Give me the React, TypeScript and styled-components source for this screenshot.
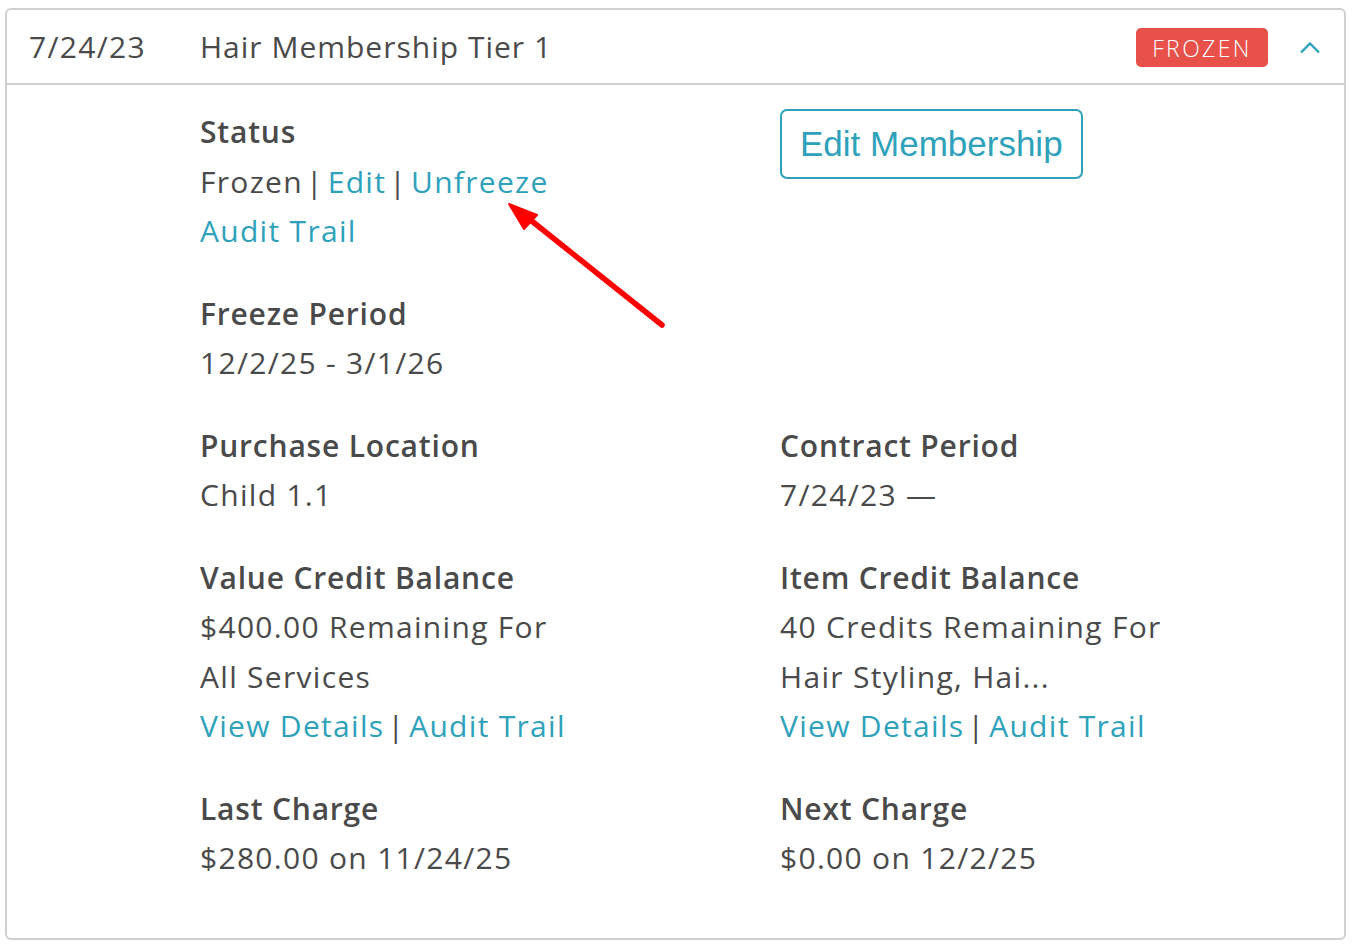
import React from "react";
import styled, { createGlobalStyle } from "styled-components";

const GlobalStyle = createGlobalStyle`
  html, body { margin: 0; padding: 0; background: #ffffff; }
  body { font-family: "Open Sans", Lato, sans-serif; color: #4a4a4a; }
  * { box-sizing: border-box; }
`;

const TEXT = "#4a4a4a";
const LINK = "#2ea2bb";

const Page = styled.div`
  position: relative;
  padding: 8px 6px 8px 5px;
  width: 1352px;
  height: 948px;
`;

const Card = styled.div`
  border: 2px solid #d0d0d0;
  border-radius: 6px;
  height: 932px;
  background: #fff;
`;

const Header = styled.div`
  display: flex;
  align-items: center;
  height: 75px;
  padding: 0 24px 0 22px;
  border-bottom: 2px solid #d0d0d0;
`;

const HeaderDate = styled.div`
  width: 171px;
  font-size: 30px;
  letter-spacing: 1.3px;
  color: ${TEXT};
`;

const HeaderTitle = styled.div`
  font-size: 30px;
  letter-spacing: 1px;
  color: ${TEXT};
  flex: 1;
`;

const Badge = styled.div`
  display: flex;
  align-items: center;
  justify-content: center;
  width: 132px;
  height: 39px;
  margin-top: 2px;
  background: #e8504a;
  color: #fff;
  border-radius: 5px;
  font-size: 23px;
  letter-spacing: 2.4px;
  font-weight: 300;
`;

const Chevron = styled.svg`
  margin-left: 32px;
  margin-top: 2px;
  display: block;
`;

const Body = styled.div`
  display: grid;
  grid-template-columns: 580px 1fr;
  padding: 22px 0 0 193px;
`;

const Section = styled.div`
  margin-bottom: 33px;
`;

const Label = styled.div`
  font-size: 30px;
  font-weight: 600;
  letter-spacing: 0.8px;
  line-height: 49.5px;
  color: ${TEXT};
`;

const Line = styled.div`
  font-size: 30px;
  letter-spacing: 1.3px;
  line-height: 49.5px;
  color: ${TEXT};
  white-space: nowrap;
`;

const Link = styled.a`
  color: ${LINK};
  text-decoration: none;
  cursor: pointer;
`;

const Sep = styled.span`
  color: ${TEXT};
  margin: 0 4px 0 3px;
`;

const ButtonCell = styled.div`
  padding-top: 2px;
`;

const EditButton = styled.button`
  height: 70px;
  padding: 0 18px;
  border: 2px solid ${LINK};
  border-radius: 7px;
  background: #fff;
  color: ${LINK};
  font-family: "Liberation Sans", Arial, sans-serif;
  font-size: 35px;
  cursor: pointer;
`;

const Annotation = styled.svg`
  position: absolute;
  left: 0;
  top: 0;
  pointer-events: none;
`;

export default function App() {
  return (
    <>
      <GlobalStyle />
      <Page>
        <Card>
          <Header>
            <HeaderDate>7/24/23</HeaderDate>
            <HeaderTitle>Hair Membership Tier 1</HeaderTitle>
            <Badge>FROZEN</Badge>
            <Chevron width="20" height="12" viewBox="0 0 20 12">
              <path d="M1 10.5 L10 1.5 L19 10.5" fill="none" stroke={LINK} strokeWidth="2.4" />
            </Chevron>
          </Header>
          <Body>
            <Section>
              <Label>Status</Label>
              <Line>
                Frozen<Sep>|</Sep><Link>Edit</Link><Sep>|</Sep><Link>Unfreeze</Link>
              </Line>
              <Line>
                <Link>Audit Trail</Link>
              </Line>
            </Section>
            <ButtonCell>
              <EditButton>Edit Membership</EditButton>
            </ButtonCell>

            <Section>
              <Label>Freeze Period</Label>
              <Line>12/2/25 - 3/1/26</Line>
            </Section>
            <div />

            <Section>
              <Label>Purchase Location</Label>
              <Line>Child 1.1</Line>
            </Section>
            <Section>
              <Label>Contract Period</Label>
              <Line>7/24/23 —</Line>
            </Section>

            <Section>
              <Label>Value Credit Balance</Label>
              <Line>$400.00 Remaining For</Line>
              <Line>All Services</Line>
              <Line>
                <Link>View Details</Link><Sep>|</Sep><Link>Audit Trail</Link>
              </Line>
            </Section>
            <Section>
              <Label>Item Credit Balance</Label>
              <Line>40 Credits Remaining For</Line>
              <Line>Hair Styling, Hai...</Line>
              <Line>
                <Link>View Details</Link><Sep>|</Sep><Link>Audit Trail</Link>
              </Line>
            </Section>

            <Section>
              <Label>Last Charge</Label>
              <Line>$280.00 on 11/24/25</Line>
            </Section>
            <Section>
              <Label>Next Charge</Label>
              <Line>$0.00 on 12/2/25</Line>
            </Section>
          </Body>
        </Card>
        <Annotation width="1352" height="948" viewBox="0 0 1352 948">
          <line x1="662" y1="325" x2="528" y2="218" stroke="#ff0000" strokeWidth="5.5" strokeLinecap="round" />
          <polygon points="509,204 537,215 524,229" fill="#ff0000" stroke="#ff0000" strokeWidth="2" strokeLinejoin="round" />
        </Annotation>
      </Page>
    </>
  );
}
